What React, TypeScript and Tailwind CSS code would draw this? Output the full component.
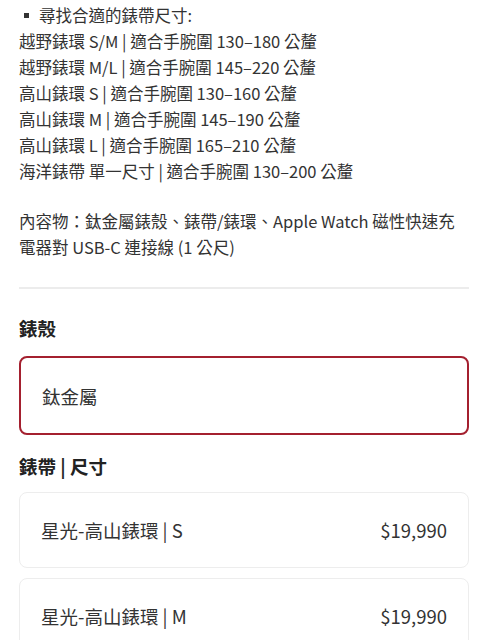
const sizes = [
  "越野錶環 S/M | 適合手腕圍 130–180 公釐",
  "越野錶環 M/L | 適合手腕圍 145–220 公釐",
  "高山錶環 S | 適合手腕圍 130–160 公釐",
  "高山錶環 M | 適合手腕圍 145–190 公釐",
  "高山錶環 L | 適合手腕圍 165–210 公釐",
  "海洋錶帶 單一尺寸 | 適合手腕圍 130–200 公釐",
];

const bands = [
  { name: "星光-高山錶環 | S", price: "$19,990" },
  { name: "星光-高山錶環 | M", price: "$19,990" },
];

export default function App() {
  return (
    <div
      className="w-[488px] h-[640px] overflow-hidden bg-white px-[19px] pt-[2px] text-[#333] text-[16.5px] leading-[26px]"
      style={{ fontFamily: '"Noto Sans CJK TC", "Noto Sans", sans-serif' }}
    >
      <div className="flex items-center">
        <span className="ml-[5px] mr-[10px] w-[5px] h-[5px] bg-[#333]" />
        <span>尋找合適的錶帶尺寸:</span>
      </div>
      {sizes.map((s) => (
        <p key={s}>{s}</p>
      ))}

      <p className="mt-[24px]">
        內容物：鈦金屬錶殼、錶帶/錶環、Apple Watch 磁性快速充電器對 USB-C 連接線 (1 公尺)
      </p>

      <div className="mt-[27px] h-[2px] bg-[#ececec]" />

      <h3 className="mt-[26px] font-bold text-[18.5px] text-[#222]">錶殼</h3>
      <div className="mt-[15px] h-[79px] rounded-[8px] border-2 border-[#a4202f] flex items-center px-[21px] text-[18.5px]">
        鈦金屬
      </div>

      <h3 className="mt-[18px] font-bold text-[18.5px] text-[#222]">錶帶 | 尺寸</h3>
      <div className="mt-[13px] flex flex-col gap-[10px]">
        {bands.map((b) => (
          <div
            key={b.name}
            className="h-[76px] rounded-[8px] border border-[#ededed] flex items-center justify-between px-[21px] text-[18.5px]"
          >
            <span>{b.name}</span>
            <span>{b.price}</span>
          </div>
        ))}
      </div>
    </div>
  );
}
